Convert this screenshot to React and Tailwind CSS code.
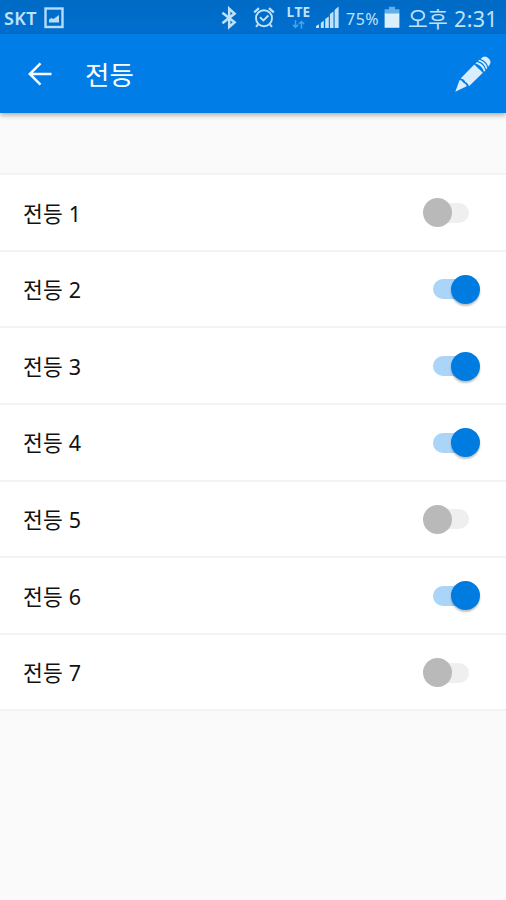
import { useState } from "react"
import clsx from "clsx"

const LAMPS = [
  { id: 1, name: "전등 1", on: false },
  { id: 2, name: "전등 2", on: true },
  { id: 3, name: "전등 3", on: true },
  { id: 4, name: "전등 4", on: true },
  { id: 5, name: "전등 5", on: false },
  { id: 6, name: "전등 6", on: true },
  { id: 7, name: "전등 7", on: false },
]

function PictureIcon() {
  return (
    <svg width="20" height="22" viewBox="0 0 20 22" className="ml-[5px] mt-[1px] text-[#b5dcf8]">
      <rect x="1.5" y="1.5" width="17" height="18.5" fill="none" stroke="currentColor" strokeWidth="2.4" />
      <path d="M5 15.5v-3l2.5-1.5 2 1 5.5-4v7.5z" fill="currentColor" />
    </svg>
  )
}

function BluetoothIcon() {
  return (
    <svg width="16" height="24" viewBox="0 0 16 24" fill="none" stroke="currentColor" strokeWidth="2.5" className="mt-[2px]">
      <path d="M1.4 6.8 13.6 16.3 8.2 21V2.7l5.4 4.9L1.4 17.2" />
    </svg>
  )
}

function AlarmIcon() {
  return (
    <svg width="22" height="23" viewBox="0 0 22 23" fill="none" stroke="currentColor" className="ml-[16px] mt-[1px]">
      <circle cx="11" cy="12.2" r="8" strokeWidth="1.9" />
      <path d="m7 11.3 3.4 3.2 5-5" strokeWidth="1.9" />
      <path d="M1.2 6.3 6 2.2M20.8 6.3 16 2.2" strokeWidth="2.3" />
      <path d="m5 18.5-2 2.3M17 18.5l2 2.3" strokeWidth="2" />
    </svg>
  )
}

function LteBadge() {
  return (
    <div className="ml-[11px] flex w-[25px] flex-col items-center">
      <span className="font-['Open_Sans',sans-serif] text-[13.5px] leading-[13px] font-bold tracking-[0.3px]">LTE</span>
      <svg width="13" height="9" viewBox="0 0 14 9" fill="none" stroke="#4ba3e8" strokeWidth="1.6" className="mt-[1px]">
        <path d="M3.8 0v7.5M1 4.8l2.8 2.8 2.8-2.8M10.2 9V1.2M7.4 4l2.8-2.8L13 4" />
      </svg>
    </div>
  )
}

function SignalIcon() {
  return (
    <svg width="24" height="23" viewBox="0 0 24 23" fill="currentColor" className="ml-[5px] mt-[1px]">
      <path d="M0 22v-2l3-1.8V22zM4.8 22v-5l3-2.5V22zM9.2 22v-9l3.6-2.5V22zM13.9 22V8l3.6-2.5V22zM18.6 22V4L22.6 0.6V22z" />
    </svg>
  )
}

function BatteryIcon() {
  return (
    <svg width="16" height="23" viewBox="0 0 16 23" className="ml-[3px] mt-[1px]">
      <path d="M5 0.8h6v2.4h4.4v5H0.6v-5H5z" fill="#62afea" />
      <path d="M0.6 7.5h14.8v14.3H0.6z" fill="#d9effc" />
    </svg>
  )
}

function StatusBar() {
  return (
    <div className="flex h-[34px] items-center bg-linear-to-b from-[#006bc5] to-[#006fd0] pl-[4px] text-[#bfe2fb]">
      <span className="w-[35px] pt-[2px] text-[18px] leading-none font-semibold tracking-[0.3px] whitespace-nowrap">SKT</span>
      <PictureIcon />
      <div className="ml-auto flex h-full items-center">
        <BluetoothIcon />
        <AlarmIcon />
        <LteBadge />
        <SignalIcon />
        <span className="ml-[6px] w-[35px] pt-[3px] text-[16px] leading-none tracking-[0.5px] whitespace-nowrap">75%</span>
        <BatteryIcon />
        <span className="ml-[8px] w-[98px] pt-[3px] text-[21.5px] leading-none tracking-[0.3px] whitespace-nowrap">오후 2:31</span>
      </div>
    </div>
  )
}

function PencilIcon() {
  return (
    <svg width="36" height="36" viewBox="0 0 36 36" fill="#d8eeff">
      <path d="M0.3 35.7 4.6 24q2 .2 3 1.7 .5 1.4 2.1 1.7 1.8 1.2 2 2.8z" />
      <path d="M5.6 22.5 19.3 8.6l8.6 8.1L14 30.2q-.8-2.6-2.6-3.6-1.3-.4-1.7-1.8-1-1.8-4.1-2.3z" />
      <path d="m20.5 7.5 1.5-1.5q6.6 1.8 8.5 8.4l-1.5 1.4q-1.9-6.2-8.5-8.3z" />
      <path d="m23.1 5 1.3-1.2q6.2 1.7 8 8.1l-1.3 1.4q-1.7-6.4-8-8.3z" />
      <path d="M25.6 2.9 27.5 1.3q3-2 6 1 3.2 3 1.3 6.1l-1.6 2.3Q31.5 4.8 25.6 2.9z" />
    </svg>
  )
}

function AppBar() {
  return (
    <header className="relative flex h-[79px] items-center bg-[#007de7] pr-[15px] pl-[28px] shadow-[0_2px_5px_rgba(60,40,30,0.4)]">
      <button aria-label="뒤로">
        <svg width="24" height="24" viewBox="0 0 24 24" fill="none" stroke="#f4faff" strokeWidth="2.5">
          <path d="M23.5 12H2.5M12.5 1.3 1.8 12l10.7 10.7" />
        </svg>
      </button>
      <h1 className="ml-[33px] pt-[3px] text-[26.5px] leading-none font-normal text-white">전등</h1>
      <button aria-label="편집" className="ml-auto">
        <PencilIcon />
      </button>
    </header>
  )
}

function Toggle({ on, onClick }) {
  return (
    <button role="switch" aria-checked={on} onClick={onClick} className="mt-px grid h-[30px] w-[58px] items-center">
      <span
        className={clsx(
          "col-start-1 row-start-1 ml-[11px] h-[20px] w-[36px] rounded-full",
          on ? "bg-[#aad4f8]" : "bg-[#efefef]"
        )}
      />
      <span
        className={clsx(
          "col-start-1 row-start-1 size-[29px] rounded-full",
          on ? "ml-[28.5px] bg-[#007be0] shadow-[0_2px_2px_rgba(0,0,0,0.25)]" : "ml-[0.5px] bg-[#b9b9b9]"
        )}
      />
    </button>
  )
}

export default function App() {
  const [lamps, setLamps] = useState(LAMPS)

  const toggle = (id) => setLamps(lamps.map((l) => (l.id === id ? { ...l, on: !l.on } : l)))

  return (
    <main className="h-[900px] w-[506px] overflow-hidden bg-[#fafafa] font-['Noto_Sans','Noto_Sans_CJK_KR',sans-serif]">
      <StatusBar />
      <AppBar />
      <ul className="mt-[60px] border-t-2 border-[#f3f3f3]">
        {lamps.map((l) => (
          <li
            key={l.id}
            className="flex h-[76.64px] items-center justify-between border-b-2 border-[#f3f3f3] bg-white pr-[26px] pl-[23px]"
          >
            <span className="pt-[2px] text-[21.5px] leading-none tracking-[0.2px] text-[#111]">{l.name}</span>
            <Toggle on={l.on} onClick={() => toggle(l.id)} />
          </li>
        ))}
      </ul>
    </main>
  )
}
